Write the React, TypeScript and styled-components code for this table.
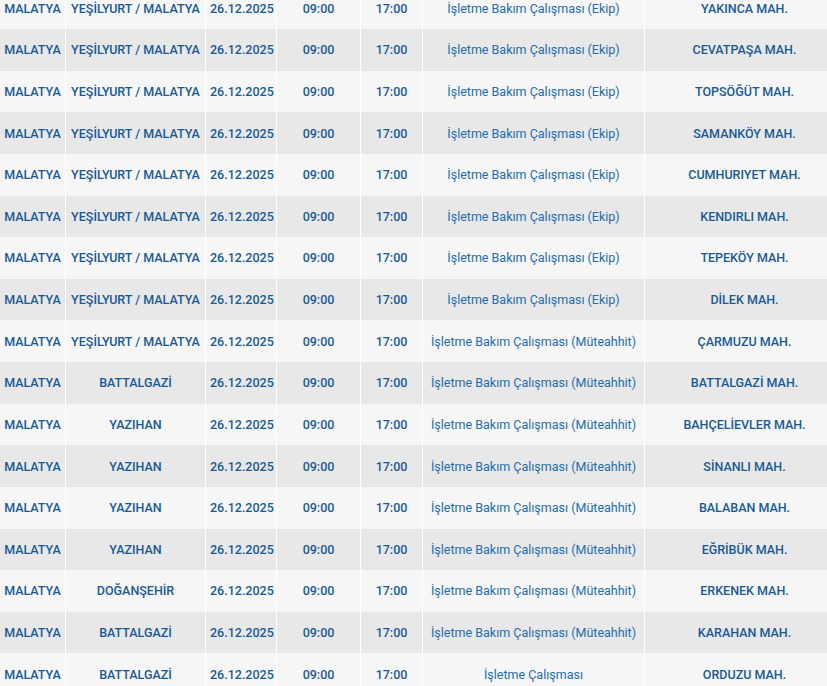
import styled, { createGlobalStyle } from 'styled-components';

const GlobalStyle = createGlobalStyle`
  html, body {
    margin: 0;
    padding: 0;
    background: #ffffff;
    overflow: hidden;
  }
`;

const ekip = 'İşletme Bakım Çalışması (Ekip)';
const muteahhit = 'İşletme Bakım Çalışması (Müteahhit)';

// ilçe, açıklama, mahalle
const kesintiler = [
  ['YEŞİLYURT / MALATYA', ekip, 'YAKINCA MAH.'],
  ['YEŞİLYURT / MALATYA', ekip, 'CEVATPAŞA MAH.'],
  ['YEŞİLYURT / MALATYA', ekip, 'TOPSÖĞÜT MAH.'],
  ['YEŞİLYURT / MALATYA', ekip, 'SAMANKÖY MAH.'],
  ['YEŞİLYURT / MALATYA', ekip, 'CUMHURIYET MAH.'],
  ['YEŞİLYURT / MALATYA', ekip, 'KENDIRLI MAH.'],
  ['YEŞİLYURT / MALATYA', ekip, 'TEPEKÖY MAH.'],
  ['YEŞİLYURT / MALATYA', ekip, 'DİLEK MAH.'],
  ['YEŞİLYURT / MALATYA', muteahhit, 'ÇARMUZU MAH.'],
  ['BATTALGAZİ', muteahhit, 'BATTALGAZİ MAH.'],
  ['YAZIHAN', muteahhit, 'BAHÇELİEVLER MAH.'],
  ['YAZIHAN', muteahhit, 'SİNANLI MAH.'],
  ['YAZIHAN', muteahhit, 'BALABAN MAH.'],
  ['YAZIHAN', muteahhit, 'EĞRİBÜK MAH.'],
  ['DOĞANŞEHİR', muteahhit, 'ERKENEK MAH.'],
  ['BATTALGAZİ', muteahhit, 'KARAHAN MAH.'],
  ['BATTALGAZİ', 'İşletme Çalışması', 'ORDUZU MAH.'],
];

// son sütun ekranın dışına taşıyor
const widths = [66, 140, 71, 84, 62, 222, 200];

export default function App() {
  return (
    <>
      <GlobalStyle />
      <Wrapper>
        <Table>
          <colgroup>
            {widths.map((w, i) => (
              <col key={i} style={{ width: w }} />
            ))}
          </colgroup>
          <tbody>
            {kesintiler.map(([ilce, aciklama, mahalle], i) => (
              <Row key={i} $dark={i % 2 === 1}>
                <Cell>MALATYA</Cell>
                <Cell>{ilce}</Cell>
                <Cell>26.12.2025</Cell>
                <Cell>09:00</Cell>
                <Cell>17:00</Cell>
                <Cell $light>{aciklama}</Cell>
                <Cell>{mahalle}</Cell>
              </Row>
            ))}
          </tbody>
        </Table>
      </Wrapper>
    </>
  );
}

const Wrapper = styled.div`
  width: 827px;
  height: 686px;
  overflow: hidden;
`;

const Table = styled.table`
  width: 846px;
  margin-top: -12.6px;
  margin-left: -1px;
  border-collapse: collapse;
  table-layout: fixed;
  font-family: Roboto, "Liberation Sans", Arial, sans-serif;
  font-size: 12.5px;
`;

const Row = styled.tr<{ $dark: boolean }>`
  height: 41.625px;
  background: ${({ $dark }) => ($dark ? '#e8e8e8' : '#f6f6f6')};
`;

const Cell = styled.td<{ $light?: boolean }>`
  padding: 0 4px;
  border: 1px solid #ffffff;
  border-top: none;
  border-bottom: none;
  text-align: center;
  white-space: nowrap;
  color: ${({ $light }) => ($light ? '#226db0' : '#185a98')};
  font-weight: ${({ $light }) => ($light ? 400 : 500)};
`;
